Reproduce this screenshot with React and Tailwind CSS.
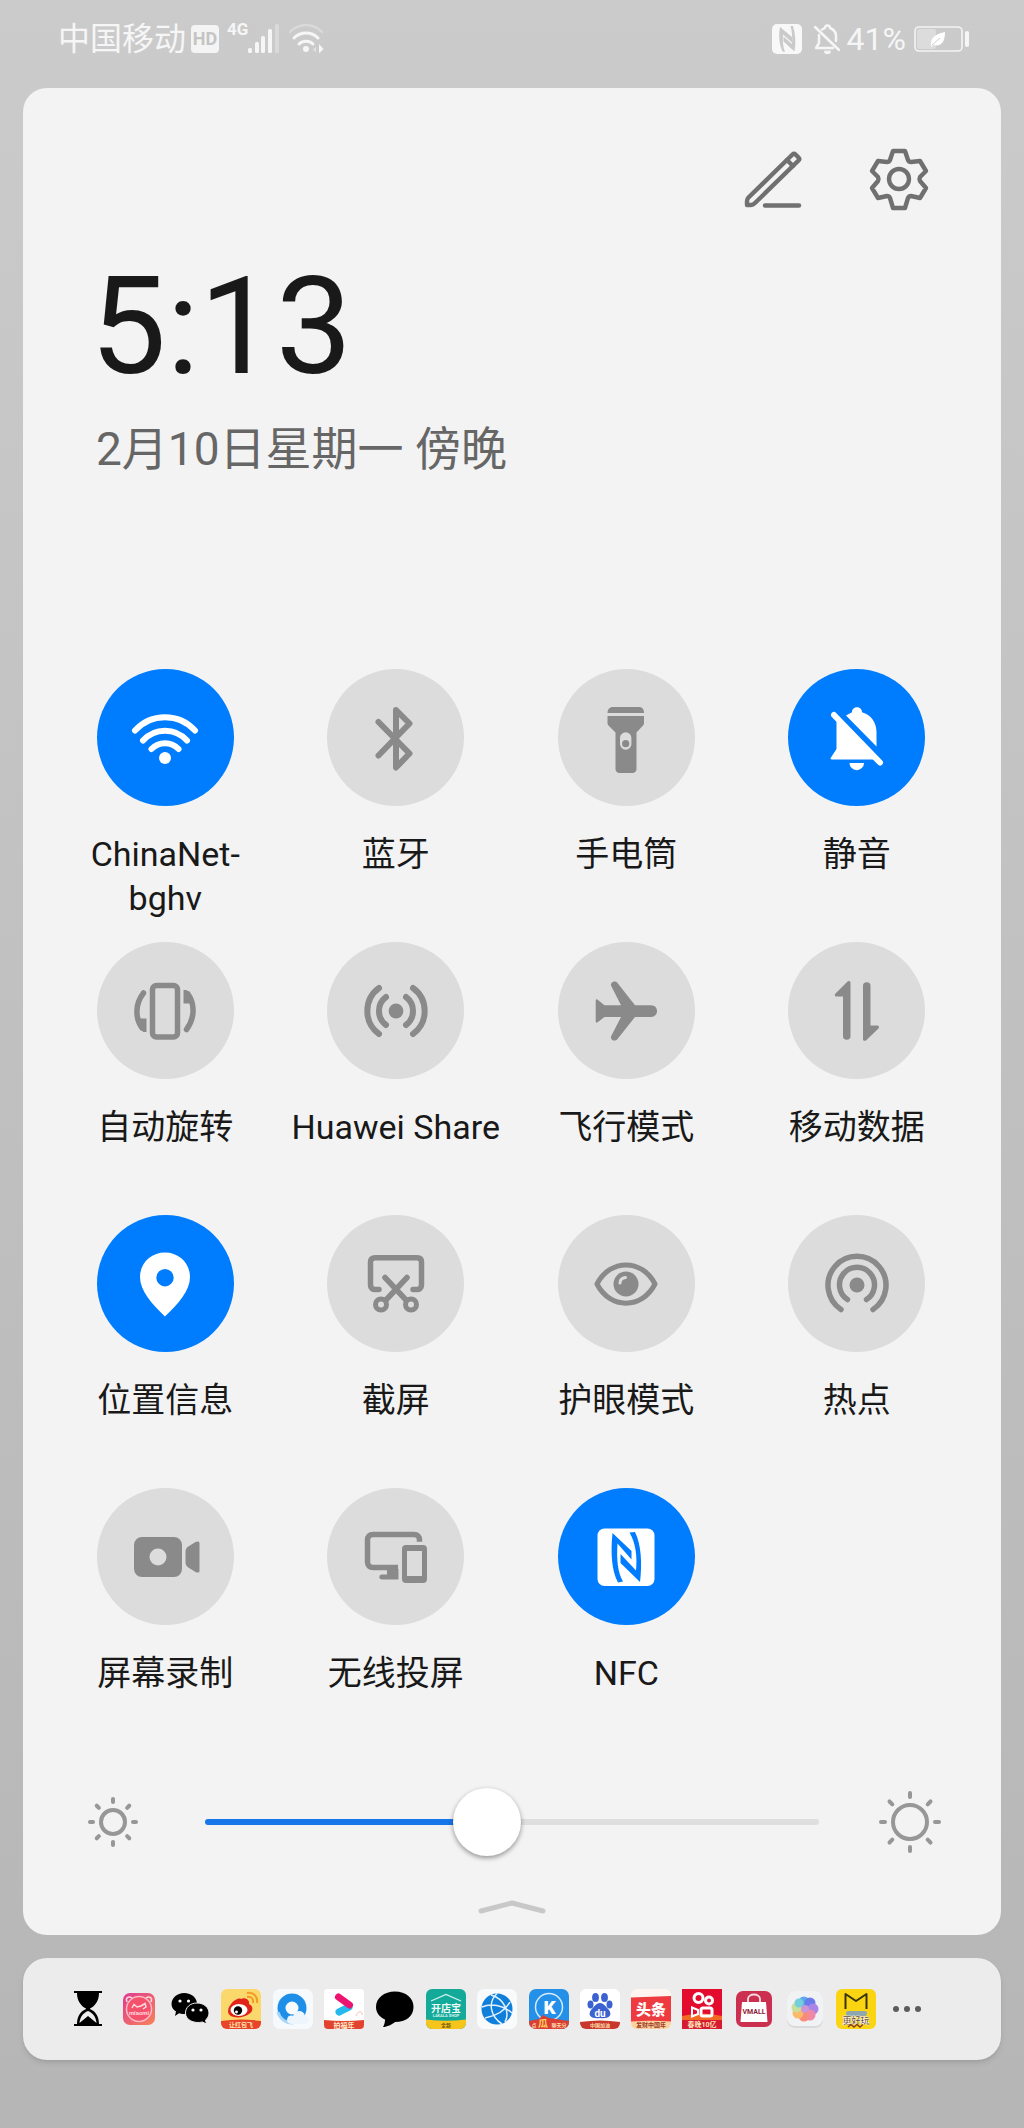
import React from 'react';

/* ---------- status bar ---------- */

const SignalIcon = () => (
  <svg viewBox="0 0 32 30" className="h-[30px] w-8" fill="#f6f6f6" aria-hidden="true">
    <rect x="0" y="24" width="4" height="5" rx="1.5" />
    <rect x="7" y="18" width="4" height="11" rx="1.5" />
    <rect x="13" y="12" width="4" height="17" rx="1.5" />
    <rect x="20" y="5" width="4" height="24" rx="1.5" />
    <rect x="27" y="0" width="4" height="29" rx="1.5" opacity="0.35" />
  </svg>
);

const StatusWifiIcon = () => (
  <svg viewBox="0 0 36 30" className="h-[30px] w-9" fill="none" stroke="#f6f6f6" strokeWidth="3" strokeLinecap="round" aria-hidden="true">
    <path d="M2 8A22 22 0 0 1 34 8" opacity="0.35" strokeWidth="2.5" />
    <path d="M6 14A17 17 0 0 1 30 14" />
    <path d="M11 20A10 10 0 0 1 25 20" />
    <circle cx="18" cy="25" r="3" fill="#f6f6f6" stroke="none" />
    <path d="M25 25.500l3-3v6z" fill="#f6f6f6" stroke="none" opacity="0.5" />
    <path d="M31 20l4.500 5-4.500 4.500z" fill="#f6f6f6" stroke="none" />
  </svg>
);

const StatusNfcIcon = () => (
  <svg viewBox="0 0 30 30" className="size-[30px]" fill="#f8f8f8" aria-hidden="true">
    <rect width="30" height="30" rx="5" />
    <g fill="#cacaca">
      <path d="M8 3L20 13V18.500L11 10.500C10.500 17 11 23 13 28L10.500 27.500C7 20 6.500 11 8 3Z" />
      <path d="M18.500 2L21 2C23.500 10 24 19 22.500 27.500L11.500 17.500V12.500L20 20C20.500 13 20 7 18.500 2Z" />
    </g>
  </svg>
);

const StatusBellIcon = () => (
  <svg viewBox="0 0 28 30" className="h-[30px] w-7" fill="none" stroke="#f6f6f6" strokeWidth="2.5" strokeLinecap="round" strokeLinejoin="round" aria-hidden="true">
    <path d="M2 3L26 26" />
    <path d="M6 11V19L3 24H20" />
    <path d="M9 5.500L12 4C12 .5 17 .5 17 4C21 5.500 23 8 23 12V17" />
    <path d="M11.500 27.500A3 2.500 0 0 0 17.500 27.500Z" fill="#f6f6f6" strokeWidth="1" />
  </svg>
);

const BatteryIcon = () => (
  <svg viewBox="0 0 56 28" className="h-7 w-14" fill="none" aria-hidden="true">
    <rect x="1" y="2" width="47" height="24" rx="4" stroke="#f4f4f4" strokeWidth="1.6" />
    <rect x="3" y="4" width="19" height="20" rx="2" fill="#dcdcdc" />
    <path d="M17 21C16 12 22 9 31 7C31 16 28 22 19 20L17 22Z" fill="#fff" />
    <path d="M18 20L26 13" stroke="#cfcfcf" strokeWidth="1" />
    <rect x="51" y="6" width="4" height="16" rx="2" fill="#f6f6f6" />
  </svg>
);

const StatusBar = () => (
  <header className="flex h-[88px] items-center justify-between pr-[54px] pl-[58px] pb-2.5 text-[32px] leading-10 text-[#f6f6f6]">
    <div className="flex items-center">
      <span>中国移动</span>
      <span className="ml-[5px] flex size-7 items-center justify-center rounded bg-[#f4f4f4] text-[18px] leading-none font-bold text-[#c4c4c4]">HD</span>
      <span className="ml-2 self-start font-['Liberation_Sans_Narrow',Roboto] text-[17px] leading-5 font-bold">4G</span>
      <SignalIcon />
      <span className="ml-2"><StatusWifiIcon /></span>
    </div>
    <div className="flex items-center">
      <StatusNfcIcon />
      <span className="ml-[11px]"><StatusBellIcon /></span>
      <span className="ml-1.5">41%</span>
      <span className="ml-2"><BatteryIcon /></span>
    </div>
  </header>
);

/* ---------- header buttons ---------- */

const EditIcon = () => (
  <svg viewBox="0 0 60 60" className="size-[60px] overflow-visible" fill="none" stroke="#707070" strokeWidth="4.4" strokeLinecap="round" strokeLinejoin="round" aria-hidden="true">
    <path d="M4 56V52Q4 50 5.500 48.500L49.500 5.500Q51 4 52.500 5.500L55.500 8.500Q57 10 55.500 11.500L12 54Q10 56 8 56Z" />
    <path d="M44 11L50 17" />
    <path d="M22 56.500H56" />
  </svg>
);

const SettingsIcon = () => (
  <svg viewBox="0 0 60 60" className="size-[60px] overflow-visible" fill="none" stroke="#707070" strokeWidth="4.4" strokeLinejoin="round" aria-hidden="true">
    <path d="M24 2H36L39 11Q40 13 42 13L51 12L57 22L51 28Q50 30 51 32L57 39L51 49L42 47Q40 47 39 49L36 59H24L21 49Q20 47 18 47L9 49L3 39L9 32Q10 30 9 28L3 22L9 12L18 13Q20 13 21 11Z" />
    <circle cx="30" cy="30" r="10" />
  </svg>
);

/* ---------- tile icons, all on a 72 x 72 canvas ---------- */

const TileSvg = ({ children }) => (
  <svg viewBox="0 0 72 72" className="size-[72px]" fill="none" stroke="currentColor" strokeWidth="6" strokeLinecap="round" strokeLinejoin="round" aria-hidden="true">
    {children}
  </svg>
);

const WifiIcon = () => (
  <TileSvg>
    <path d="M6 28.500A40.500 40.500 0 0 1 66 28.500" />
    <path d="M14 38.500A29.500 29.500 0 0 1 58 38.500" />
    <path d="M22.500 47A18.500 18.500 0 0 1 49.500 47" />
    <circle cx="36" cy="56" r="6" fill="currentColor" stroke="none" />
  </TileSvg>
);

const BluetoothIcon = () => (
  <TileSvg>
    <path d="M18.500 20L49.500 51.500L36 65.500V8L49.500 21.500L18.500 53.500" />
  </TileSvg>
);

const TorchIcon = () => (
  <TileSvg>
    <g fill="currentColor" stroke="none">
      <path d="M17.500 11C17.500 7 20 5 23 5H49C52 5 54 7 54 11Z" />
      <path fillRule="evenodd" d="M17.500 14H54V21C54 22 53.500 23 53 23.500L46.500 30.500V67C46.500 69 45 71 42.500 71H29.500C27 71 25.500 69 25.500 67V30.500L18.500 23.500C18 23 17.500 22 17.500 21ZM30 36V42A5.700 5.700 0 0 0 41.400 42V36A5.700 5.700 0 0 0 30 36Z" />
      <circle cx="35.700" cy="41.700" r="3.600" />
    </g>
  </TileSvg>
);

const MuteIcon = () => (
  <TileSvg>
    <path d="M13 13L59 60.500" />
    <g fill="currentColor" stroke="none">
      <path d="M15.500 17L54 57.500H11C9.500 57.500 9 56.500 10 55.500L15.500 47Z" />
      <path d="M25 13.500L31 10.200C31 3.500 41 3.500 41 10.200C50 13 55.500 20 55.500 30V44.500Z" />
      <path d="M28.500 61H43A7.200 7.200 0 0 1 28.500 61Z" />
    </g>
  </TileSvg>
);

const RotateIcon = () => (
  <TileSvg>
    <rect x="23.500" y="10.500" width="25" height="51.500" rx="4" strokeWidth="5.500" />
    <path d="M14.500 18C6 29 6 43 13 53" strokeWidth="5.500" />
    <path d="M9 43.500H17.500V57L14 57Z" fill="currentColor" stroke="none" />
    <path d="M57.500 54.500C66 43 66 29 59 19" strokeWidth="5.500" />
    <path d="M63 28.500H54.500V15L58 15Z" fill="currentColor" stroke="none" />
  </TileSvg>
);

const ShareIcon = () => (
  <TileSvg>
    <circle cx="36" cy="36" r="7.400" fill="currentColor" stroke="none" />
    <path d="M46 22A17.500 17.500 0 0 1 46 50M26 22A17.500 17.500 0 0 0 26 50" />
    <path d="M53 13A28.500 28.500 0 0 1 53 59M19 13A28.500 28.500 0 0 0 19 59" />
  </TileSvg>
);

const PlaneIcon = () => (
  <TileSvg>
    <path
      fill="currentColor"
      stroke="none"
      d="M5.700 26C5.700 24 7 24 8 25L14.500 30.200H31L21.500 11.500C19 7.500 25 4.500 27.500 8L45 30.200H61C69 30.200 69 42 61 42H45L27.500 64C25 67.500 19 64.500 21.500 60.500L31 42H14.500L8 47C7 48 5.700 48 5.700 46Z"
    />
  </TileSvg>
);

const DataIcon = () => (
  <TileSvg>
    <g fill="currentColor" stroke="none">
      <path d="M29.500 8C29.500 5.500 27.500 5.500 26.500 6.500L14.500 18.500C13 20 14 21.500 15.500 21.500H22V61A3.700 3.700 0 0 0 29.500 61Z" />
      <path d="M42 11A3.700 3.700 0 0 1 49.500 11V50.500H56C58 50.500 58.500 52 57.500 53.500L45.500 65C44 66.500 42 66 42 64Z" />
    </g>
  </TileSvg>
);

const LocationIcon = () => (
  <TileSvg>
    <path fill="currentColor" stroke="none" fillRule="evenodd" d="M36 4.500C50 4.500 61 15 61 29C61 43 49 56 36 68.500C23 56 11 43 11 29C11 15 22 4.500 36 4.500ZM36 21A8.700 8.700 0 1 0 36 38.400A8.700 8.700 0 1 0 36 21Z" />
  </TileSvg>
);

const ScreenshotIcon = () => (
  <TileSvg>
    <path d="M19 41.500H15C12.500 41.500 10.500 40 10.500 37V14C10.500 11 12 9.700 15 9.700H57C60 9.700 61.500 11 61.500 14V37C61.500 40 59.500 41.500 57 41.500H53" strokeWidth="5.500" />
    <path d="M25 29.500L46 52M47 29.500L26 52" strokeWidth="5.500" />
    <circle cx="21" cy="56.500" r="5.500" strokeWidth="5" />
    <circle cx="51" cy="56.500" r="5.500" strokeWidth="5" />
  </TileSvg>
);

const EyeIcon = () => (
  <TileSvg>
    <path d="M7 36C20 10.500 52 10.500 65 36C52 61.500 20 61.500 7 36Z" strokeWidth="5" />
    <circle cx="36" cy="36" r="12.500" fill="currentColor" stroke="none" />
    <path d="M30 35C30 32 32 30 35.500 29.500" stroke="#dcdcdc" strokeWidth="3" />
  </TileSvg>
);

const HotspotIcon = () => (
  <TileSvg>
    <circle cx="36" cy="37" r="7.500" fill="currentColor" stroke="none" />
    <path d="M26.500 51.500A17.500 17.500 0 1 1 45.500 51.500" strokeWidth="5.500" />
    <path d="M20 61.500A29 29 0 1 1 52 61.500" strokeWidth="5.500" />
  </TileSvg>
);

const RecordIcon = () => (
  <TileSvg>
    <g fill="currentColor" stroke="none">
      <path fillRule="evenodd" d="M13 16H45A8 8 0 0 1 53 24V48A8 8 0 0 1 45 56H13A8 8 0 0 1 5 48V24A8 8 0 0 1 13 16ZM29 27.500A8.500 8.500 0 1 0 29 44.500A8.500 8.500 0 1 0 29 27.500Z" />
      <path d="M56.500 31C56.500 29 57 27.500 58.500 26L66.500 21C68.500 20 70.500 20 70.500 22.500V49.500C70.500 52 68.500 52 66.500 51L58.500 46C57 44.500 56.500 43 56.500 41Z" />
    </g>
  </TileSvg>
);

const CastIcon = () => (
  <TileSvg>
    <path d="M59.500 20.700V19C59.500 15.500 57.500 13.500 54 13.500H13C9.500 13.500 7.500 15.500 7.500 19V41C7.500 44.500 9.500 46.500 13 46.500H38" strokeWidth="5.500" strokeLinecap="butt" />
    <path d="M27 48H38.500V58.500H22C18.500 58.500 18.500 53.500 22 53.500H27Z" fill="currentColor" stroke="none" />
    <path fillRule="evenodd" d="M46 24H63A4 4 0 0 1 67 28V58A4 4 0 0 1 63 62H46A4 4 0 0 1 42 58V28A4 4 0 0 1 46 24ZM47 30V55H62V30Z" fill="currentColor" stroke="none" />
  </TileSvg>
);

const NfcIcon = () => (
  <TileSvg>
    <rect x="7.500" y="7.500" width="57" height="57.500" rx="7" fill="currentColor" stroke="none" />
    <g fill="#007dff" stroke="none">
      <path d="M22.500 12L41.500 30V38.500L27.500 22.500C26.500 38 27.500 51 33 60.500L28 61.500C21.500 50 20.500 31 22.500 12Z" />
      <path d="M39.500 11.500L45 11C51 23 52.500 42 50 61L30.500 42V33L46 49.500C47.500 35 45.500 22 39.500 11.500Z" />
    </g>
  </TileSvg>
);

const TILES = [
  { label: 'ChinaNet-bghv', Icon: WifiIcon, on: true },
  { label: '蓝牙', Icon: BluetoothIcon },
  { label: '手电筒', Icon: TorchIcon },
  { label: '静音', Icon: MuteIcon, on: true },
  { label: '自动旋转', Icon: RotateIcon },
  { label: 'Huawei Share', Icon: ShareIcon },
  { label: '飞行模式', Icon: PlaneIcon },
  { label: '移动数据', Icon: DataIcon },
  { label: '位置信息', Icon: LocationIcon, on: true },
  { label: '截屏', Icon: ScreenshotIcon },
  { label: '护眼模式', Icon: EyeIcon },
  { label: '热点', Icon: HotspotIcon },
  { label: '屏幕录制', Icon: RecordIcon },
  { label: '无线投屏', Icon: CastIcon },
  { label: 'NFC', Icon: NfcIcon, on: true },
];

const Tile = ({ label, Icon, on, onToggle }) => (
  <button type="button" aria-pressed={on} onClick={onToggle} className="flex min-h-[273px] flex-col items-center">
    <span className={`flex size-[137px] items-center justify-center rounded-full ${on ? 'bg-[#007dff] text-white' : 'bg-[#dcdcdc] text-[#8a8a8a]'}`}>
      <Icon />
    </span>
    <span className="mt-[26px] max-w-[212px] text-center text-[34px] leading-11 text-[#191919]">{label}</span>
  </button>
);

/* ---------- brightness ---------- */

const SunIcon = ({ radius, inner, outer, className }) => (
  <svg viewBox="-32 -32 64 64" className={className} fill="none" stroke="#979797" strokeWidth="4" strokeLinecap="round" aria-hidden="true">
    <circle r={radius} />
    {[0, 45, 90, 135, 180, 225, 270, 315].map((deg) => (
      <path key={deg} d={`M0 -${inner}V-${outer}`} transform={`rotate(${deg})`} />
    ))}
  </svg>
);

const Brightness = () => {
  const [value, setValue] = React.useState(454);

  return (
    <div className="mt-[27px] flex items-center pr-[59px] pl-[58px]">
      <SunIcon radius={12} inner={20} outer={23} className="size-16 shrink-0" />
      <input
        type="range"
        min="0"
        max="1000"
        value={value}
        onChange={(e) => setValue(Number(e.target.value))}
        aria-label="亮度"
        style={{ '--fill': `${value / 10}%` }}
        className="mr-[59px] ml-[60px] h-[68px] min-w-0 flex-1 appearance-none bg-transparent [&::-webkit-slider-runnable-track]:h-1.5 [&::-webkit-slider-runnable-track]:rounded-full [&::-webkit-slider-runnable-track]:bg-[linear-gradient(to_right,#1677e8_var(--fill),#dedede_var(--fill))] [&::-webkit-slider-thumb]:-mt-[31px] [&::-webkit-slider-thumb]:size-[68px] [&::-webkit-slider-thumb]:appearance-none [&::-webkit-slider-thumb]:rounded-full [&::-webkit-slider-thumb]:bg-white [&::-webkit-slider-thumb]:shadow-[0_2px_5px_rgba(0,0,0,0.4)]"
      />
      <SunIcon radius={17} inner={25} outer={29} className="size-16 shrink-0" />
    </div>
  );
};

/* ---------- dock ---------- */

const AppSvg = ({ children }) => (
  <svg viewBox="0 0 40 40" className="size-10" fontFamily="Roboto, 'Noto Sans CJK SC', sans-serif" fontWeight="700" textAnchor="middle" aria-hidden="true">
    {children}
  </svg>
);

const HourglassApp = () => (
  <AppSvg>
    <path d="M6 2H34V4H6ZM9 4H31C31 12 27 17 22 19.500V20C27 22 31 27 31 35H34V37H6V35H9C9 27 13 22 18 20V19.500C13 17 9 12 9 4Z" />
    <path d="M11.500 34C12 28 15 24 20 22C25 24 28 28 28.500 34L20 27Z" fill="#ececec" />
    <path d="M12 35L20 28.500L28 35Z" />
  </AppSvg>
);

const CatApp = () => (
  <AppSvg>
    <defs>
      <linearGradient id="cat" x1="0" y1="0" x2="1" y2="1">
        <stop offset="0" stopColor="#e03a92" />
        <stop offset="1" stopColor="#f58457" />
      </linearGradient>
    </defs>
    <rect x="4" y="4" width="32" height="32" rx="7" fill="url(#cat)" />
    <circle cx="20" cy="20" r="12.500" fill="#f4526c" stroke="#ffb8c4" strokeWidth="1.500" />
    <path d="M8 13C6 8 10 7 13 9M32 13C34 8 30 7 27 9M13 19L15 15.500L18 18L22 17L26 14.500L27 18L24 20" fill="none" stroke="#ffd9de" strokeWidth="1.500" />
    <text x="20" y="26" fontSize="6" fill="#ffd9de">miaomi</text>
  </AppSvg>
);

const WechatApp = () => (
  <AppSvg>
    <path d="M14 4C22 4 27 9 27 15C27 22 21 25 14 25C12 25 10 24.800 9 24.300L5 27L6 22.500C3 20.500 1.500 18 1.500 15C1.500 9 7 4 14 4Z" />
    <path d="M27 14C34 14 39 18.500 39 24C39 27 37.500 29.500 35.500 31L36.500 35L32.500 33C24 35 15.500 31 15.500 24C15.500 18.500 20 14 27 14Z" stroke="#ececec" strokeWidth="1" />
    <g fill="#fff">
      <circle cx="10" cy="12" r="1.600" /><circle cx="18.500" cy="12" r="1.600" />
      <circle cx="23" cy="21" r="1.600" /><circle cx="31" cy="21" r="1.600" />
    </g>
  </AppSvg>
);

const WeiboApp = () => (
  <AppSvg>
    <rect width="40" height="40" rx="6" fill="#fbd86c" />
    <path d="M7 22C8 14 17 8 20 10C23 8 29 10 28 15C33 17 32 23 28 25C21 30 7 30 7 22Z" fill="#e2231a" />
    <ellipse cx="18" cy="21" rx="8.500" ry="6" fill="#fff" />
    <circle cx="17" cy="21.500" r="4.200" />
    <circle cx="15.500" cy="23" r="1.400" fill="#fff" />
    <path d="M26 8C30 7 33 10 32 14M26 4C33 3 37 8 36 14" fill="none" stroke="#f39a20" strokeWidth="2" />
    <path d="M0 32Q20 29 40 32V34A6 6 0 0 1 34 40H6A6 6 0 0 1 0 34Z" fill="#e8442a" />
    <text x="20" y="38" fontSize="6" fill="#ffe9b0">让红包飞</text>
  </AppSvg>
);

const QQBrowserApp = () => (
  <AppSvg>
    <rect width="40" height="40" rx="7" fill="#f7fafd" />
    <circle cx="19" cy="19" r="10.500" fill="none" stroke="#1e8fe8" strokeWidth="8" />
    <path d="M5 23A14.500 14.500 0 0 0 20 34" fill="none" stroke="#a6d5f8" strokeWidth="3" />
    <path d="M19 35C15 35 13 32 14.500 29C15.500 26.500 18 26 20 27C22 20 31 21 32 27C37 27 37 35 32 35Z" fill="#eef6fd" />
  </AppSvg>
);

const WeishiApp = () => (
  <AppSvg>
    <rect width="40" height="40" rx="4" fill="#fff" />
    <path d="M15 23L25 18" stroke="#27b9ee" strokeWidth="7" strokeLinecap="round" />
    <path d="M14.500 8L25.500 16" stroke="#ec1470" strokeWidth="7" strokeLinecap="round" />
    <path d="M32 27C34 21 39 22 38 26" fill="none" stroke="#f5bcb4" strokeWidth="1" />
    <path d="M0 31Q20 33 40 31V36A4 4 0 0 1 36 40H4A4 4 0 0 1 0 36Z" fill="#e2432f" />
    <text x="20" y="38.500" fontSize="7" fill="#ffe9c8">拍福年</text>
  </AppSvg>
);

const BubbleApp = () => (
  <AppSvg>
    <path d="M20 2.500C31 2.500 38.500 9 38.500 18C38.500 27 31 33 20 33C17 35.500 12 38 8 38C9.500 35.500 10 33 10 30.500C4.500 28 1 23.500 1 18C1 9 9 2.500 20 2.500Z" />
  </AppSvg>
);

const StoreApp = () => (
  <AppSvg>
    <rect width="40" height="40" rx="6" fill="#14aa9a" />
    <path d="M0 30.500Q20 33 40 30.500V34A6 6 0 0 1 34 40H6A6 6 0 0 1 0 34Z" fill="#f5c51c" />
    <path d="M5 12L20 5.500L35 12" fill="none" stroke="#d7f2ef" strokeWidth="1.200" />
    <text x="20" y="22.500" fontSize="10" fill="#eafaf8">开店宝</text>
    <text x="20" y="28" fontSize="4" fill="#d7f2ef">LAKALA SHOP</text>
    <text x="20" y="38" fontSize="5" fill="#6c5310">全新</text>
  </AppSvg>
);

const BrowserApp = () => (
  <AppSvg>
    <rect width="40" height="40" rx="7" fill="#f8fafc" />
    <circle cx="20" cy="20" r="15.500" fill="#0f7fdc" />
    <path d="M5 18C14 14 26 16 35 24M20 4.500C10 14 14 28 25 35M14 6C28 10 33 24 28 33M8 29C18 27 28 22 33 13" fill="none" stroke="#e4f1fb" strokeWidth="1.500" />
  </AppSvg>
);

const KugouApp = () => (
  <AppSvg>
    <rect width="40" height="40" rx="7" fill="#2490e8" />
    <circle cx="20" cy="18" r="13.500" fill="none" stroke="#d2ebff" strokeWidth="1.500" />
    <text x="20.500" y="25" fontSize="19" fontWeight="900" fill="#fff">K</text>
    <path d="M0 32L10 30L14 26L20 29L40 32V33A7 7 0 0 1 33 40H7A7 7 0 0 1 0 33Z" fill="#d93f32" />
    <text x="14" y="37.500" fontSize="10" fill="#ffd463">瓜</text>
    <text x="30" y="38" fontSize="5" fill="#ffd9b0">聊天分</text>
    <text x="5" y="38" fontSize="5" fill="#ffd9b0">点</text>
  </AppSvg>
);

const BaiduApp = () => (
  <AppSvg>
    <rect width="40" height="40" rx="6" fill="#fff" />
    <g fill="#3b62d0">
      <ellipse cx="15.500" cy="8.500" rx="3.400" ry="4.500" />
      <ellipse cx="24.500" cy="8.500" rx="3.400" ry="4.500" />
      <ellipse cx="10.500" cy="15.500" rx="3" ry="4" />
      <ellipse cx="29.500" cy="15.500" rx="3" ry="4" />
      <path d="M20 14C24 14 26 18 29 21C33 27 28 30 20 29C12 30 7 27 11 21C14 18 16 14 20 14Z" />
    </g>
    <text x="20" y="27.500" fontSize="10" fill="#fff">du</text>
    <path d="M0 33Q20 30 40 33V34A6 6 0 0 1 34 40H6A6 6 0 0 1 0 34Z" fill="#c8382c" />
    <text x="20" y="38" fontSize="5" fill="#ffdca8">中国加油</text>
  </AppSvg>
);

const ToutiaoApp = () => (
  <AppSvg>
    <rect width="40" height="40" rx="6" fill="#fff5f0" />
    <path d="M0 8.500L40 7V34H0Z" fill="#ee3b40" />
    <text x="20" y="26" fontSize="15" fontWeight="900" fill="#fff">头条</text>
    <path d="M0 32.500Q20 31 40 32.500V34A6 6 0 0 1 34 40H6A6 6 0 0 1 0 34Z" fill="#fbd2a0" />
    <text x="20" y="38" fontSize="6" fill="#9c3a26">发财中国年</text>
  </AppSvg>
);

const KuaishouApp = () => (
  <AppSvg>
    <rect width="40" height="40" fill="#e30b2e" />
    <path d="M0 27Q20 22 40 27V40H0Z" fill="#f26a24" />
    <path d="M0 31H40V40H0Z" fill="#d61a30" />
    <g fill="none" stroke="#fff" strokeWidth="3">
      <circle cx="16.500" cy="9" r="4.500" />
      <circle cx="27" cy="11.500" r="3.500" />
      <rect x="19" y="19" width="11" height="8" rx="2" />
      <path d="M10 18.500L16 21V25L10 27.500Z" strokeWidth="2" />
    </g>
    <text x="20" y="38" fontSize="7" fill="#ffe3b8">春晚10亿</text>
  </AppSvg>
);

const VmallApp = () => (
  <AppSvg>
    <rect x="2" y="2" width="36" height="36" rx="7" fill="#cb3050" />
    <path d="M14 15V10C14 4 26 4 26 10V15" fill="none" stroke="#f7dde2" strokeWidth="1.800" />
    <path d="M8 13H32L33.500 33H6.500Z" fill="#fff" />
    <text x="20" y="24.500" fontSize="7" fill="#8e2038">VMALL</text>
  </AppSvg>
);

const GalleryApp = () => (
  <AppSvg>
    <rect x="2" y="2" width="36" height="37" rx="8" fill="#d9dadc" />
    <rect x="2" y="2" width="36" height="35" rx="8" fill="#f1f2f4" />
    <g opacity="0.9">
      <circle cx="19" cy="13" r="5.500" fill="#4aa0ee" />
      <circle cx="25" cy="14" r="5.500" fill="#5d6fe8" />
      <circle cx="28" cy="20" r="5.500" fill="#a479ea" />
      <circle cx="25" cy="26" r="5.500" fill="#ee7fa0" />
      <circle cx="19" cy="27" r="5.500" fill="#fa8070" />
      <circle cx="13" cy="24" r="5.500" fill="#fdb35c" />
      <circle cx="11.500" cy="18.500" r="5" fill="#c4dd92" />
      <circle cx="14" cy="14" r="4.500" fill="#66cdd8" />
      <circle cx="20" cy="20" r="4" fill="#c98bd0" />
    </g>
  </AppSvg>
);

const MeituanApp = () => (
  <AppSvg>
    <rect width="40" height="40" rx="6" fill="#fbd412" />
    <path d="M9.500 20V5L20 12L30.500 5V20" fill="none" stroke="#3c3310" strokeWidth="2" strokeLinejoin="round" />
    <rect x="10" y="22" width="21" height="5" rx="2" fill="#8fa8b0" />
    <text x="20" y="35" fontSize="9" fontWeight="900" fill="#4a2c14" stroke="#fff" strokeWidth="0.500">更好玩</text>
    <path d="M12 38L15 35.500L18 38L21 35.500L24 38L27 35.500" fill="none" stroke="#8c3e20" strokeWidth="1.500" />
  </AppSvg>
);

const MoreDots = () => (
  <AppSvg>
    <g fill="#5c5c5c">
      <circle cx="9" cy="20" r="3" />
      <circle cx="20" cy="20" r="3" />
      <circle cx="31" cy="20" r="3" />
    </g>
  </AppSvg>
);

const APPS = [
  { name: '沙漏', Icon: HourglassApp },
  { name: '喵咪', Icon: CatApp },
  { name: '微信', Icon: WechatApp },
  { name: '微博', Icon: WeiboApp },
  { name: 'QQ浏览器', Icon: QQBrowserApp },
  { name: '微视', Icon: WeishiApp },
  { name: '信息', Icon: BubbleApp },
  { name: '开店宝', Icon: StoreApp },
  { name: '浏览器', Icon: BrowserApp },
  { name: '酷狗', Icon: KugouApp },
  { name: '百度', Icon: BaiduApp },
  { name: '头条', Icon: ToutiaoApp },
  { name: '快手', Icon: KuaishouApp },
  { name: 'VMALL', Icon: VmallApp },
  { name: '图库', Icon: GalleryApp },
  { name: '美团', Icon: MeituanApp },
  { name: '更多', Icon: MoreDots },
];

const Dock = () => (
  <nav className="mx-[23px] mt-[23px] flex h-[102px] items-center rounded-3xl bg-[#ececec] pr-[68px] pl-[39px] shadow-md">
    {APPS.map(({ name, Icon }) => (
      <button key={name} type="button" aria-label={name} className="flex flex-1 justify-center">
        <Icon />
      </button>
    ))}
  </nav>
);

const App = () => {
  const [tiles, setTiles] = React.useState(TILES);

  const toggle = (index) => {
    setTiles((list) => list.map((tile, i) => (i === index ? { ...tile, on: !tile.on } : tile)));
  };

  return (
    <div
      lang="zh-CN"
      className="min-h-screen bg-linear-to-b from-[#cbcbcb] via-[#c0c0c0] to-[#b6b6b6] font-[Roboto,'Noto_Sans_CJK_SC',sans-serif]"
    >
      <StatusBar />

      <main className="mx-[23px] rounded-3xl bg-[#f3f3f3] pt-[61px] pb-[21px]">
        <div className="flex justify-end gap-[66px] pr-[72px]">
          <button type="button" aria-label="编辑"><EditIcon /></button>
          <button type="button" aria-label="设置"><SettingsIcon /></button>
        </div>

        <h1 className="mt-[50px] pl-[67px] text-[136px] leading-none text-[#191919]">5:13</h1>
        <p className="mt-6 pl-[73px] text-[46px] leading-[60px] text-[#666666]">2月10日星期一 傍晚</p>

        <section className="mt-[190px] grid grid-cols-4 pr-[29px] pl-[27px]">
          {tiles.map((tile, i) => (
            <Tile key={tile.label} {...tile} onToggle={() => toggle(i)} />
          ))}
        </section>

        <Brightness />

        <button type="button" aria-label="收起" className="mx-auto mt-11 block">
          <svg viewBox="0 0 68 14" className="h-3.5 w-[68px]" fill="none" stroke="#c8c8c8" strokeWidth="5" strokeLinecap="round" strokeLinejoin="round" aria-hidden="true">
            <path d="M3 11L34 3L65 11" />
          </svg>
        </button>
      </main>

      <Dock />
    </div>
  );
};

export default App;
